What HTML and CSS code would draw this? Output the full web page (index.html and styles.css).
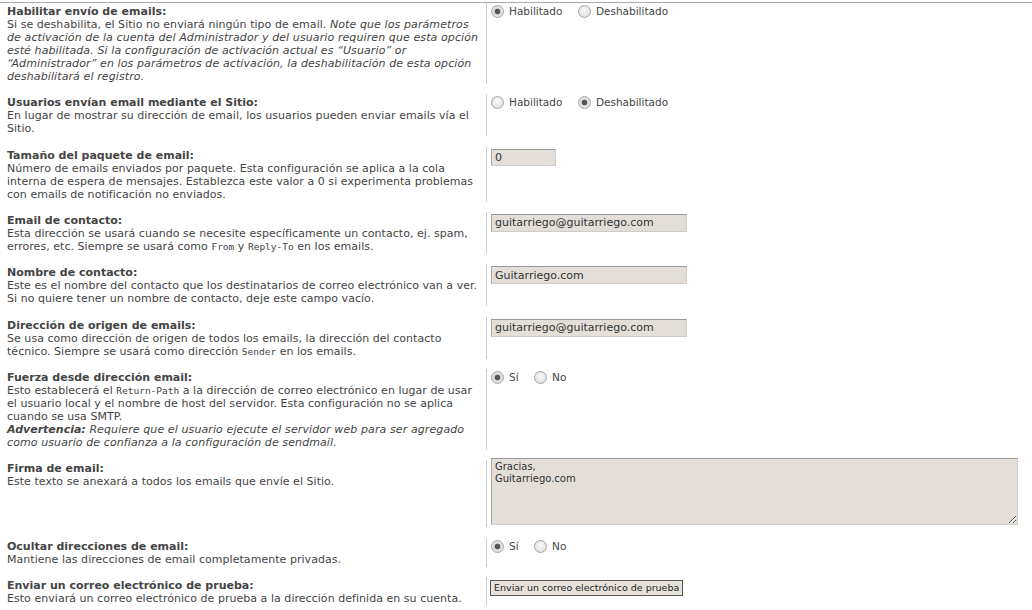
FILE: index.html
```html
<!DOCTYPE html>
<html>

<head>
    <title>Configuración de email</title>
    <meta charset="utf-8">
    <link rel="stylesheet" href="styles.css">
</head>

<body>
    <div class="settings">
        <div class="row">
            <div class="label">
                <strong>Habilitar envío de emails:</strong>
                <div class="desc">Si se deshabilita, el Sitio no enviará ningún tipo de email. <em>Note que los parámetros de activación de la cuenta del Administrador y del usuario requiren que esta opción esté habilitada. Si la configuración de activación actual es “Usuario” or “Administrador” en los parámetros de activación, la deshabilitación de esta opción deshabilitará el registro.</em></div>
            </div>
            <div class="field">
                <label class="radio"><input type="radio" name="mail_enabled" checked> Habilitado</label>
                <label class="radio"><input type="radio" name="mail_enabled"> Deshabilitado</label>
            </div>
        </div>

        <div class="row">
            <div class="label">
                <strong>Usuarios envían email mediante el Sitio:</strong>
                <div class="desc">En lugar de mostrar su dirección de email, los usuarios pueden enviar emails vía el Sitio.</div>
            </div>
            <div class="field">
                <label class="radio"><input type="radio" name="user_mail"> Habilitado</label>
                <label class="radio"><input type="radio" name="user_mail" checked> Deshabilitado</label>
            </div>
        </div>

        <div class="row">
            <div class="label">
                <strong>Tamaño del paquete de email:</strong>
                <div class="desc">Número de emails enviados por paquete. Esta configuración se aplica a la cola interna de espera de mensajes. Establezca este valor a 0 si experimenta problemas con emails de notificación no enviados.</div>
            </div>
            <div class="field">
                <input type="text" class="text short" value="0">
            </div>
        </div>

        <div class="row">
            <div class="label">
                <strong>Email de contacto:</strong>
                <div class="desc">Esta dirección se usará cuando se necesite específicamente un contacto, ej. spam, errores, etc. Siempre se usará como <code>From</code> y <code>Reply-To</code> en los emails.</div>
            </div>
            <div class="field">
                <input type="text" class="text" value="guitarriego@guitarriego.com">
            </div>
        </div>

        <div class="row">
            <div class="label">
                <strong>Nombre de contacto:</strong>
                <div class="desc">Este es el nombre del contacto que los destinatarios de correo electrónico van a ver. Si no quiere tener un nombre de contacto, deje este campo vacío.</div>
            </div>
            <div class="field">
                <input type="text" class="text" value="Guitarriego.com">
            </div>
        </div>

        <div class="row">
            <div class="label">
                <strong>Dirección de origen de emails:</strong>
                <div class="desc">Se usa como dirección de origen de todos los emails, la dirección del contacto técnico. Siempre se usará como dirección <code>Sender</code> en los emails.</div>
            </div>
            <div class="field">
                <input type="text" class="text" value="guitarriego@guitarriego.com">
            </div>
        </div>

        <div class="row">
            <div class="label">
                <strong>Fuerza desde dirección email:</strong>
                <div class="desc">Esto establecerá el <code>Return-Path</code> a la dirección de correo electrónico en lugar de usar el usuario local y el nombre de host del servidor. Esta configuración no se aplica cuando se usa SMTP.<br><em><strong>Advertencia:</strong> Requiere que el usuario ejecute el servidor web para ser agregado como usuario de confianza a la configuración de sendmail.</em></div>
            </div>
            <div class="field">
                <label class="radio"><input type="radio" name="force_from" checked> Sí</label>
                <label class="radio"><input type="radio" name="force_from"> No</label>
            </div>
        </div>

        <div class="row">
            <div class="label">
                <strong>Firma de email:</strong>
                <div class="desc">Este texto se anexará a todos los emails que envíe el Sitio.</div>
            </div>
            <div class="field field-area">
                <textarea class="signature">Gracias,
Guitarriego.com</textarea>
            </div>
        </div>

        <div class="row">
            <div class="label">
                <strong>Ocultar direcciones de email:</strong>
                <div class="desc">Mantiene las direcciones de email completamente privadas.</div>
            </div>
            <div class="field">
                <label class="radio"><input type="radio" name="hide_email" checked> Sí</label>
                <label class="radio"><input type="radio" name="hide_email"> No</label>
            </div>
        </div>

        <div class="row">
            <div class="label">
                <strong>Enviar un correo electrónico de prueba:</strong>
                <div class="desc">Esto enviará un correo electrónico de prueba a la dirección definida en su cuenta.</div>
            </div>
            <div class="field">
                <button class="test-button">Enviar un correo electrónico de prueba</button>
            </div>
        </div>
    </div>
</body>

</html>
```

FILE: styles.css
```css
body {
    margin: 0;
    padding: 0;
    background-color: #ffffff;
    color: #444;
    font-family: "DejaVu Sans", Verdana, sans-serif;
    font-size: 11px;
    line-height: 13px;
}

.settings {
    margin-top: 2px;
    border-top: 1px solid #aaa;
}

.row {
    display: flex;
    margin-bottom: 10.33px;
}

.label {
    width: 473px;
    flex-shrink: 0;
    padding: 2px 6px 1px 7px;
}

.label strong {
    display: block;
}

.desc {
    letter-spacing: 0.04px;
}

.desc em {
    letter-spacing: 0.1px;
}

.desc em strong {
    display: inline;
    letter-spacing: 0;
}

code {
    font-family: "DejaVu Sans Mono", monospace;
    font-size: 9.5px;
    line-height: 1;
    letter-spacing: 0;
}

.field {
    flex: 1;
    border-left: 1px solid #ccc;
    padding: 2px 4px;
}

.field-area {
    padding-top: 0;
}

.radio {
    display: inline-flex;
    align-items: center;
    margin-right: 12px;
    font-size: 10.5px;
}

.radio input {
    appearance: none;
    -webkit-appearance: none;
    width: 13px;
    height: 13px;
    margin: 0 5px 0 0;
    border: 1px solid #a4a4a4;
    border-radius: 50%;
    background: radial-gradient(circle at 50% 40%, #fafafa 0, #e2e2e2 70%, #d4d4d4 100%);
}

.radio input:checked {
    background: radial-gradient(circle, #555 0, #555 2.5px, #dcdcdc 3.2px, #ececec 100%);
}

.text {
    box-sizing: border-box;
    width: 196px;
    height: 18px;
    margin: 0;
    padding: 0 3px;
    background-color: #e3dfd8;
    border: 1px solid #ccc;
    border-top-color: #9a9a9a;
    border-left-color: #a8a8a8;
    color: #333;
    font-family: "DejaVu Sans", Verdana, sans-serif;
    font-size: 11px;
}

.text.short {
    width: 65px;
    height: 17px;
}

.signature {
    box-sizing: border-box;
    display: block;
    width: 527px;
    height: 67px;
    margin: -2px 0 0 0;
    padding: 2px 3px;
    background-color: #e3dfd8;
    border: 1px solid #ccc;
    border-top-color: #9a9a9a;
    border-left-color: #a8a8a8;
    color: #333;
    font-family: "DejaVu Sans", Verdana, sans-serif;
    font-size: 10px;
    line-height: 12px;
    resize: both;
}

.test-button {
    box-sizing: border-box;
    height: 16px;
    margin: 1px 0 0 -1px;
    padding: 0 3px;
    background-color: #e6e2da;
    border: 1px solid #555;
    border-radius: 0;
    color: #222;
    font-family: "DejaVu Sans", sans-serif;
    font-size: 9.5px;
    line-height: 14px;
}
```
